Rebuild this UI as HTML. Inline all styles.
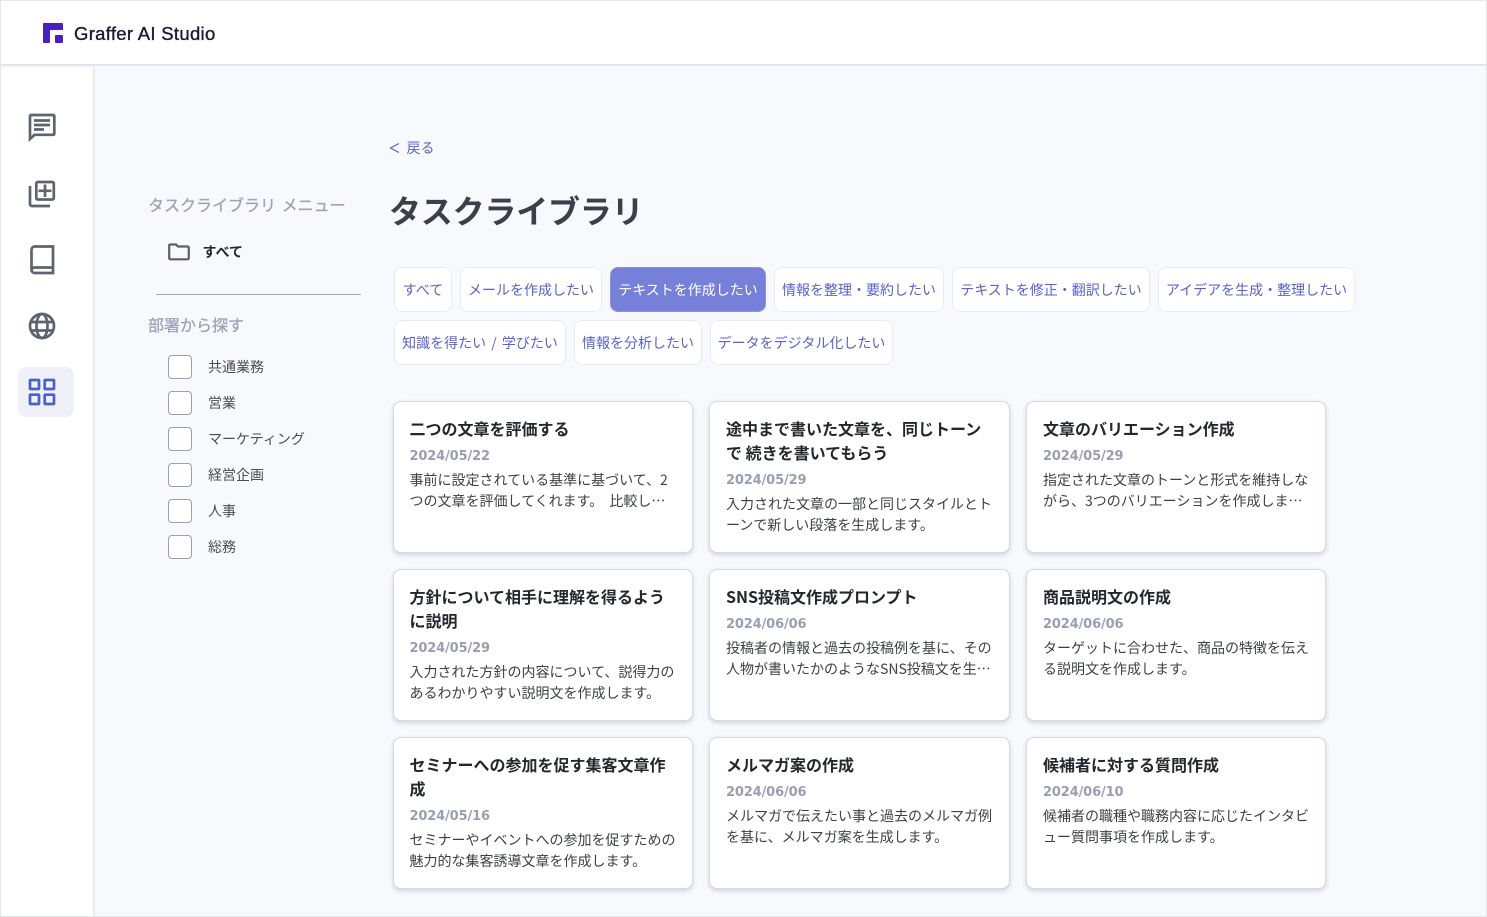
<!DOCTYPE html>
<html lang="ja"><head><meta charset="utf-8"><title>Graffer AI Studio</title>
<style>
*{box-sizing:border-box}
html,body{margin:0;padding:0}
body{width:1487px;height:917px;position:relative;overflow:hidden;background:#f8f9fd;font-family:"Liberation Sans","Noto Sans CJK JP",sans-serif;color:#333}
.abs,.chip,.card,.cb,.lb{position:absolute}
.jp{font-family:"Noto Sans CJK JP",sans-serif}
#frame{position:absolute;inset:0;border:1px solid #e6e7ea;pointer-events:none;z-index:9}
#head{position:absolute;left:0;top:0;width:1487px;height:64px;background:#fff;box-shadow:0 1px 2px rgba(40,50,80,.16);z-index:3}
#side{position:absolute;left:0;top:67px;width:93px;height:850px;background:#fff;box-shadow:1px 0 3px rgba(40,50,80,.12);z-index:2}
#active{position:absolute;left:18px;top:367px;width:56px;height:50px;border-radius:8px;background:#f0f1f8;z-index:3}
svg.ic{position:absolute;z-index:4;fill:none}
.chip{height:45px;line-height:44px;text-align:center;background:#fff;border:1px solid #e8eafa;border-radius:8px;color:#5a62c9;font-size:14px;font-family:"Noto Sans CJK JP",sans-serif;white-space:nowrap;word-spacing:2px}
.chip.on{background:#7780d8;color:#fff;border-color:#8a92e0}
.card{width:300px;height:152px;background:#fff;border:1px solid #d6d9e6;border-radius:8px;box-shadow:0 2px 5px rgba(50,60,90,.2);padding:14px 16px;white-space:nowrap;font-family:"Noto Sans CJK JP",sans-serif}
.t{font-size:16px;line-height:24px;font-weight:700;color:#25272e;margin-top:-.5px}
.d{font-size:13px;line-height:22px;margin-top:6px;color:#9a9eb0;letter-spacing:-.15px;font-family:"DejaVu Sans","Liberation Sans",sans-serif;font-weight:700}
.p{font-size:14px;line-height:21px;margin-top:2.5px;color:#3c3f46;word-spacing:3px}
.cb{left:168px;width:24px;height:24px;background:#fff;border:1px solid #98a0b8;border-radius:4px}
.lb{left:208px;font-size:14px;line-height:20px;color:#4a4d55;font-family:"Noto Sans CJK JP",sans-serif;white-space:nowrap}
.h{left:148px;font-size:16px;line-height:24px;color:#9ca3b8;-webkit-text-stroke:.3px #9ca3b8;white-space:nowrap}
</style></head><body>
<div id="frame"></div>
<div id="head">
<svg class="ic" style="left:43px;top:23px" width="20" height="20" viewBox="0 0 20 20"><path fill="#4a1fc0" d="M1 0H19a1 1 0 0 1 1 1V7H7V19a1 1 0 0 1-1 1H1a1 1 0 0 1-1-1V1a1 1 0 0 1 1-1Z"/><rect fill="#4a1fc0" x="12" y="12" width="8" height="8" rx="1"/></svg>
<div class="abs" style="left:74px;top:21px;font-size:18.5px;line-height:25px;color:#1c1a33;font-family:'Liberation Sans',sans-serif;-webkit-text-stroke:.35px #1c1a33;letter-spacing:.3px;white-space:nowrap">Graffer AI Studio</div>
</div>
<div id="side"></div>
<div id="active"></div>
<svg class="ic" style="left:28px;top:113px" width="28" height="29" viewBox="0 0 28 29" stroke="#5f636f" stroke-width="2.7"><path d="M3 2H25.300a1 1 0 0 1 1 1V20.800a1 1 0 0 1-1 1H6.500L2 26V3A1 1 0 0 1 3 2Z"/><path d="M6 7.500H22M6 12H22M6 16.500H16"/></svg>
<svg class="ic" style="left:28px;top:179px" width="28" height="29" viewBox="0 0 28 29" stroke="#5f636f" stroke-width="2.7"><rect x="8.300" y="3" width="17.500" height="17.500" rx="1.500"/><path d="M17 5.500V18M10.500 11.800H23.500"/><path d="M2 7V25A2 2 0 0 0 4 27H22"/></svg>
<svg class="ic" style="left:29px;top:245px" width="26" height="30" viewBox="0 0 26 30" stroke="#5f636f" stroke-width="2.7"><path d="M2.500 24V5A3.500 3.500 0 0 1 5.500 1.500H24V28H5.500A3.200 3.200 0 0 1 2.500 24.800A3 3 0 0 1 5.500 22.500H24"/></svg>
<svg class="ic" style="left:28px;top:312px" width="28" height="28" viewBox="0 0 28 28" stroke="#5f636f" stroke-width="2.700"><circle cx="14" cy="14" r="12"/><ellipse cx="14" cy="14" rx="5.500" ry="12"/><path d="M2.500 10H25.500M2.500 18.500H25.500"/></svg>
<svg class="ic" style="left:28px;top:378px" width="28" height="28" viewBox="0 0 28 28" stroke="#4a62c8" stroke-width="2.700"><rect x="2" y="2" width="9" height="9" rx=".5"/><rect x="16.700" y="2" width="9.300" height="9" rx=".5"/><rect x="2" y="16.700" width="9" height="9.300" rx=".5"/><rect x="16.700" y="16.700" width="9.300" height="9.300" rx=".5"/></svg>

<div class="abs jp h" style="top:192px;word-spacing:2px">タスクライブラリ メニュー</div>
<svg class="ic" style="left:168px;top:242px" width="22" height="19" viewBox="0 0 22 19" stroke="#5a5e6a" stroke-width="2.200"><path d="M1.200 3A1.500 1.500 0 0 1 2.700 2.500H8L10 4.500H19.300A1.500 1.500 0 0 1 20.800 5.500V16A1.500 1.500 0 0 1 19.300 17.300H2.700A1.500 1.500 0 0 1 1.200 16Z"/></svg>
<div class="abs jp" style="left:202.500px;top:242px;font-size:14px;line-height:20px;font-weight:700;color:#25272e;white-space:nowrap">すべて</div>
<div class="abs" style="left:156px;top:294px;width:205px;height:1px;background:#a1a8c0"></div>
<div class="abs jp h" style="top:312px">部署から探す</div>
<div class="cb" style="top:355px"></div><div class="lb" style="top:357px">共通業務</div>
<div class="cb" style="top:391px"></div><div class="lb" style="top:393px">営業</div>
<div class="cb" style="top:427px"></div><div class="lb" style="top:429px">マーケティング</div>
<div class="cb" style="top:463px"></div><div class="lb" style="top:465px">経営企画</div>
<div class="cb" style="top:499px"></div><div class="lb" style="top:501px">人事</div>
<div class="cb" style="top:535px"></div><div class="lb" style="top:537px">総務</div>

<svg class="ic" style="left:389px;top:142px" width="12" height="12" viewBox="0 0 12 12" stroke="#5a62c9" stroke-width="1.200"><path d="M10 1.500L1.500 6L10 10.500"/></svg>
<div class="abs jp" style="left:406.500px;top:138px;font-size:14px;line-height:20px;color:#5a62c9;white-space:nowrap">戻る</div>
<div class="abs jp" style="left:389px;top:187px;font-size:32px;line-height:46px;font-weight:700;color:#3b3f4a;letter-spacing:-.2px;white-space:nowrap">タスクライブラリ</div>

<div class="chip" style="left:394px;top:267px;width:58px">すべて</div>
<div class="chip" style="left:460px;top:267px;width:142px">メールを作成したい</div>
<div class="chip on" style="left:610px;top:267px;width:156px">テキストを作成したい</div>
<div class="chip" style="left:774px;top:267px;width:170px">情報を整理・要約したい</div>
<div class="chip" style="left:952px;top:267px;width:198px">テキストを修正・翻訳したい</div>
<div class="chip" style="left:1158px;top:267px;width:197px">アイデアを生成・整理したい</div>
<div class="chip" style="left:394px;top:320px;width:172px">知識を得たい / 学びたい</div>
<div class="chip" style="left:574px;top:320px;width:128px">情報を分析したい</div>
<div class="chip" style="left:710px;top:320px;width:183px">データをデジタル化したい</div>

<div class="card" style="left:393px;top:401px;padding-left:15.500px"><div class="t">二つの文章を評価する</div><div class="d">2024/05/22</div><div class="p">事前に設定されている基準に基づいて、2<br>つの文章を評価してくれます。 比較し…</div></div>
<div class="card" style="left:709px;top:401px;width:301px"><div class="t">途中まで書いた文章を、同じトーン<br>で 続きを書いてもらう</div><div class="d">2024/05/29</div><div class="p">入力された文章の一部と同じスタイルとト<br>ーンで新しい段落を生成します。</div></div>
<div class="card" style="left:1026px;top:401px"><div class="t">文章のバリエーション作成</div><div class="d">2024/05/29</div><div class="p">指定された文章のトーンと形式を維持しな<br>がら、3つのバリエーションを作成しま…</div></div>

<div class="card" style="left:393px;top:569px;padding-left:15.500px"><div class="t">方針について相手に理解を得るよう<br>に説明</div><div class="d">2024/05/29</div><div class="p">入力された方針の内容について、説得力の<br>あるわかりやすい説明文を作成します。</div></div>
<div class="card" style="left:709px;top:569px;width:301px"><div class="t">SNS投稿文作成プロンプト</div><div class="d">2024/06/06</div><div class="p">投稿者の情報と過去の投稿例を基に、その<br>人物が書いたかのようなSNS投稿文を生…</div></div>
<div class="card" style="left:1026px;top:569px"><div class="t">商品説明文の作成</div><div class="d">2024/06/06</div><div class="p">ターゲットに合わせた、商品の特徴を伝え<br>る説明文を作成します。</div></div>

<div class="card" style="left:393px;top:737px;padding-left:15.500px"><div class="t">セミナーへの参加を促す集客文章作<br>成</div><div class="d">2024/05/16</div><div class="p">セミナーやイベントへの参加を促すための<br>魅力的な集客誘導文章を作成します。</div></div>
<div class="card" style="left:709px;top:737px;width:301px"><div class="t">メルマガ案の作成</div><div class="d">2024/06/06</div><div class="p">メルマガで伝えたい事と過去のメルマガ例<br>を基に、メルマガ案を生成します。</div></div>
<div class="card" style="left:1026px;top:737px"><div class="t">候補者に対する質問作成</div><div class="d">2024/06/10</div><div class="p">候補者の職種や職務内容に応じたインタビ<br>ュー質問事項を作成します。</div></div>
</body></html>
